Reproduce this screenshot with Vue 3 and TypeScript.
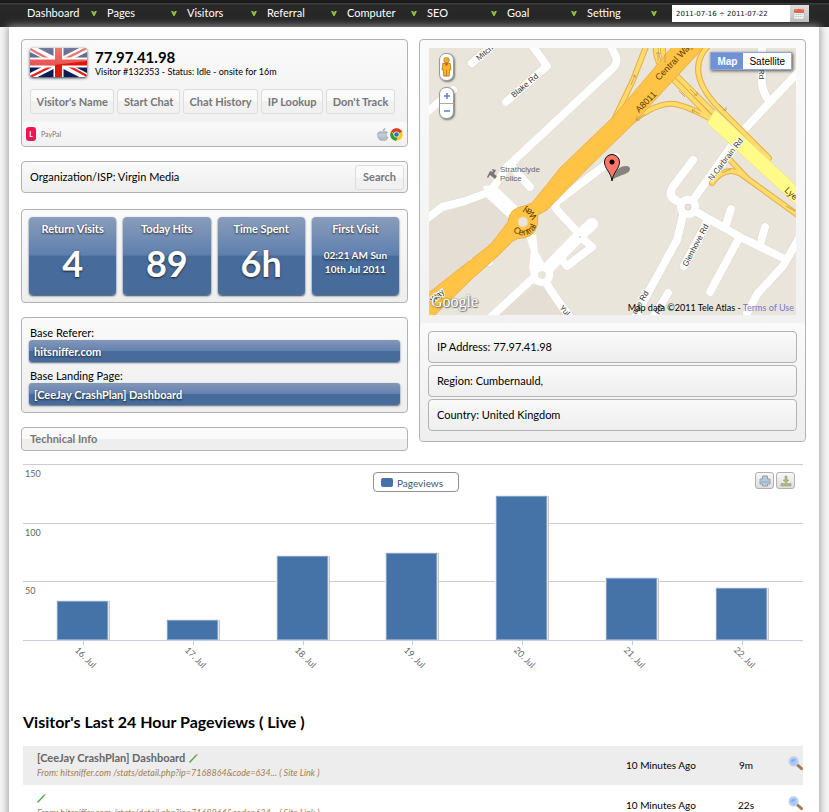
<script setup lang="ts">
import { ref } from 'vue'

interface Stat { label: string; value: string; small?: boolean }
interface Visit { title: string; source: string; ago: string; spent: string }

const menu: string[] = ['Dashboard', 'Pages', 'Visitors', 'Referral', 'Computer', 'SEO', 'Goal', 'Setting']
const range = ref('2011-07-16 ÷ 2011-07-22')
const actions: string[] = ["Visitor's Name", 'Start Chat', 'Chat History', 'IP Lookup', "Don't Track"]

const stats: Stat[] = [
  { label: 'Return Visits', value: '4' },
  { label: 'Today Hits', value: '89' },
  { label: 'Time Spent', value: '6h' },
  { label: 'First Visit', value: '02:21 AM Sun\n10th Jul 2011', small: true },
]

const location: string[] = ['IP Address: 77.97.41.98', 'Region: Cumbernauld,', 'Country: United Kingdom']

const axisMax = 150
const gridSteps: number[] = [150, 100, 50]
const days = [
  { label: '16. Jul', views: 33 },
  { label: '17. Jul', views: 17 },
  { label: '18. Jul', views: 72 },
  { label: '19. Jul', views: 74 },
  { label: '20. Jul', views: 123 },
  { label: '21. Jul', views: 53 },
  { label: '22. Jul', views: 44 },
]

const source = 'From: hitsniffer.com /stats/detail.php?ip=7168864&code=634... ( Site Link )'
const visits: Visit[] = [
  { title: '[CeeJay CrashPlan] Dashboard', source, ago: '10 Minutes Ago', spent: '9m' },
  { title: '', source, ago: '10 Minutes Ago', spent: '22s' },
]

const streets: string[] = [
  'M43 15 L66 -5',
  'M77 54 L118 18 L102 -4',
  'M-3 65 L24 42',
  'M181 -4 L187 9 Q189 15 184 20 L78 119 L60 146',
  'M84 120 L101 139',
  'M-4 172 L13 159 L33 154 L58 145',
  'M103 231 L62 269',
  'M117 234 Q125 249 142 270',
  'M151 187 L128 162 Q124 157 130 152 L187 109',
  'M152 189 L163 199 L138 218 L131 210',
  'M264 112 L243 140 Q239 149 248 153 L259 159',
  'M259 159 L311 86 L372 21',
  'M338 50 Q331 38 333 26 L333 -4',
  'M254 167 L248 192 L219 245 L206 270',
  'M239 245 L224 270',
  'M259 159 L313 190 L354 210',
  'M296 180 L302 161',
  'M331 197 L336 179',
  'M279 172 L255 218',
  'M309 192 L281 244',
  'M370 190 L354 218 L329 245 L318 265',
  'M44 214 L60 214',
  'M30 228 L-3 256',
]

const ramps: string[] = [
  'M218 -4 L204 32 L184 74',
  'M192 82 Q226 53 246 56 C264 60 272 66 284 72',
  'M227 -4 Q225 14 240 27 L284 72',
  'M234 -4 Q232 12 246 26 L288 68',
  'M281 -4 C264 12 265 32 286 56 L340 110',
  'M283 135 Q296 117 312 126 L370 168',
  'M301 112 L317 129',
]
</script>

<template>
  <div class="page">
    <header class="topbar">
      <nav class="menu">
        <a v-for="m in menu" :key="m" href="#" class="menu-item">
          <span>{{ m }}</span>
          <svg class="caret" viewBox="0 0 6 5" aria-hidden="true"><path d="M0 0H2L3 1.6L4 0H6L3.6 5H2.4Z" fill="#8cc63a" /></svg>
        </a>
      </nav>
      <div class="range">
        <input v-model="range" type="text" aria-label="Date range" />
        <button type="button" aria-label="Open calendar">
          <svg viewBox="0 0 12 12" aria-hidden="true">
            <rect x="1" y="2" width="10" height="9" rx="1" fill="#eef3f3" stroke="#b5bcbc" stroke-width=".6" />
            <rect x="1" y="1" width="10" height="4" rx="1" fill="#e4604f" />
            <path d="M3 0v2.400M9 0v2.400" stroke="#f6b5a8" />
            <path d="M2.500 6.500h7M2.500 8.500h7" stroke="#a8cfc4" stroke-width="1.200" stroke-dasharray="1.500 .6" />
          </svg>
        </button>
      </div>
    </header>

    <main class="sheet">
      <div class="columns">
        <div class="col">
          <section class="panel visitor">
            <div class="who">
              <svg class="flag" viewBox="0 0 57 29" preserveAspectRatio="none" role="img" aria-label="United Kingdom">
                <defs>
                  <linearGradient id="gloss" x1="0" y1="0" x2="0" y2="1">
                    <stop offset="0" stop-color="#fff" stop-opacity=".42" />
                    <stop offset="1" stop-color="#fff" stop-opacity=".25" />
                  </linearGradient>
                </defs>
                <rect width="57" height="29" fill="#0c1c56" />
                <path d="M0 0L57 29M57 0L0 29" stroke="#fff" stroke-width="7" />
                <path d="M0 1L24 14M57 28L33 15M0 29L26 16M57 0L31 13" stroke="#e2231c" stroke-width="2.400" />
                <path d="M28.500 0V29M0 14.500H57" stroke="#fff" stroke-width="10" />
                <path d="M28.500 0V29" stroke="#e2150f" stroke-width="7" />
                <path d="M0 14.500H57" stroke="#e2150f" stroke-width="6" />
                <path d="M0 0H57V13Q28 17 0 19Z" fill="url(#gloss)" />
              </svg>
              <div>
                <h1>77.97.41.98</h1>
                <p>Visitor #132353 - Status: Idle - onsite for 16m</p>
              </div>
            </div>
            <div class="actions">
              <button v-for="a in actions" :key="a" type="button" class="soft">{{ a }}</button>
            </div>
            <div class="foot">
              <span class="badge">L</span>
              <span class="tag">PayPal</span>
              <svg class="brand" viewBox="0 0 13 13" aria-hidden="true">
                <path d="M9 .3Q9.200 2.400 7 3.200Q6.800 1 9 .3ZM6.800 3.900Q9.500 2.600 11.600 4.300Q9.600 5.800 10.200 7.600Q10.700 9 12 9.300Q10.800 12.600 9 12.600Q7.200 11.900 5.600 12.600Q3.600 12.800 2 9.500Q.7 5.600 2.700 4.100Q4.700 2.900 6.800 3.900Z" fill="#b3bccb" stroke="#929daf" stroke-width=".5" />
                <path d="M2.500 6.500H9M2.500 8H9.500" stroke="#dce2ec" stroke-width=".6" />
              </svg>
              <svg class="brand" viewBox="0 0 13 13" aria-hidden="true">
                <circle cx="6.500" cy="6.500" r="6.200" fill="#f6cf18" />
                <path d="M6.500 6.500L1.100 3.400A6.200 6.200 0 0 1 12 3.800Z" fill="#dc3b26" />
                <path d="M1.100 3.400A6.200 6.200 0 0 0 6 12.700L8 8.500L4 7.600Z" fill="#2f9a3c" />
                <circle cx="6.500" cy="6.500" r="2.900" fill="#f4f4ee" />
                <circle cx="6.500" cy="6.500" r="2.300" fill="#3273b9" />
              </svg>
            </div>
          </section>

          <section class="panel isp">
            <span>Organization/ISP: Virgin Media</span>
            <button type="button" class="soft">Search</button>
          </section>

          <section class="panel stats">
            <div v-for="s in stats" :key="s.label" class="tile">
              <span class="tile-label">{{ s.label }}</span>
              <span :class="s.small ? 'tile-date' : 'tile-value'">{{ s.value }}</span>
            </div>
          </section>

          <section class="panel base">
            <p>Base Referer:</p>
            <a href="#" class="bluebar">hitsniffer.com</a>
            <p>Base Landing Page:</p>
            <a href="#" class="bluebar">[CeeJay CrashPlan] Dashboard</a>
          </section>

          <button type="button" class="panel tech">Technical Info</button>
        </div>

        <div class="col">
          <section class="panel where">
            <div class="map">
              <svg class="roads" viewBox="0 0 367 267" preserveAspectRatio="xMidYMid slice" role="img" aria-label="Street map">
                <defs><path id="ring" d="M84 183A14 14 0 1 0 90 160" /></defs>
                <rect width="367" height="267" fill="#e9e5da" />
                <path d="M66 267L110 235L139 267ZM0 170V258L60 205L92 180L58 150L33 157Z" fill="#e1dbd3" fill-opacity=".7" />
                <g fill="none" stroke-linecap="round" stroke-linejoin="round">
                  <g stroke="#dcd6cb" stroke-width="9">
                    <path v-for="(d, i) in streets" :key="i" :d="d" />
                  </g>
                  <g stroke="#fff" stroke-width="8">
                    <path v-for="(d, i) in streets" :key="i" :d="d" />
                  </g>
                  <path d="M113 226L151 187L163 176" stroke="#fff" stroke-width="12" />
                </g>
                <path d="M54 138L66 137L90 160L86 176L58 150ZM97 188L107 186L109 204L117 219L128 211L122 232L105 236L100 220L102 203Z" fill="#fff" />
                <circle cx="113" cy="227" r="11" fill="#fff" />
                <circle cx="113" cy="227" r="4" fill="#e9e5da" />
                <circle cx="259" cy="159" r="11" fill="#fff" />
                <circle cx="259" cy="159" r="3" fill="#e9e5da" stroke="#d4cfc4" />
                <circle cx="151" cy="189" r="1" fill="#d8d3c9" />
                <g fill="none" stroke-linecap="round">
                  <path v-for="(d, i) in ramps" :key="i" :d="d" stroke="#e5ad4c" stroke-width="6" />
                  <path v-for="(d, i) in ramps" :key="i" :d="d" stroke="#ffdb69" stroke-width="4" />
                </g>
                <path d="M286 62L292 67L375 145V164L278 75Z" fill="#fffb89" stroke="#efdb8a" stroke-width=".7" />
                <path d="M244 -2L276 -2L202 78L160 119L118 162L109 167Q110 188 94 190Q88 190 84 193L70 207L44 230L4 269H-3V247L30 221L62 196L79 174Q80 160 95 158L103 155L132 119L183 70Z" fill="#ffc345" stroke="#e9a947" stroke-width=".8" />
                <circle cx="94" cy="174" r="5" fill="#e9e5da" stroke="#f3d79a" />
                <g stroke="#b89a55" stroke-width=".8" fill="none">
                  <path d="M202 37L206 27M204 28L206 27L207 30M229 13V4M227 6L229 4L231 6M236 15V6M261 41L268 48M265 47H268V44M256 49L250 43M263 62L271 66M266 62H263L264 65M207 72L216 66M208 68L207 72L211 72M290 56L297 63M294 62H297V59M293 125L302 121M357 158L366 163" />
                </g>
                <g class="street-names">
                  <text transform="translate(50 13) rotate(-40)">Mitch</text>
                  <text transform="translate(85 50) rotate(-40)">Blake Rd</text>
                  <text transform="translate(283 133) rotate(-52)">N Carbrain Rd</text>
                  <text transform="translate(258 219) rotate(-62)">Glenhove Rd</text>
                  <text transform="translate(207 267) rotate(-60)">age Rd</text>
                  <text transform="translate(230 267) rotate(-58)">Rd</text>
                  <text transform="translate(130 260) rotate(48)">Yul</text>
                  <text transform="translate(4 255) rotate(-42)">Way</text>
                  <text transform="translate(330 21) rotate(90)">Rd</text>
                </g>
                <g class="main-names">
                  <text transform="translate(230 33) rotate(-46)">Central Way</text>
                  <text transform="translate(210 65) rotate(-45)">A8011</text>
                  <text transform="translate(355 143) rotate(42)">Lye</text>
                  <text><textPath href="#ring">Central</textPath></text>
                  <text><textPath href="#ring" startOffset="37">Way</textPath></text>
                </g>
                <g class="poi">
                  <path d="M63 130L66 124L69 125L68 122L72 123L70 127L73 129L71 132L66 128L64 131Z" fill="#777" transform="translate(-5 -1)" />
                  <text x="71" y="124">Strathclyde</text>
                  <text x="71" y="133">Police</text>
                </g>
                <path d="M183 132C185 124 190 118 197 118C203 118 202 124 196 126C191 128 187 129 183 132Z" fill="#333" fill-opacity=".55" />
                <path d="M183 133C182 124 175.500 121 175.500 114A7.500 7.500 0 0 1 190.500 114C190.500 121 184 124 183 133Z" fill="#fe7569" stroke="#111" />
                <circle cx="183" cy="114" r="2.500" fill="#000" />
              </svg>
              <div class="map-ui">
                <div class="map-controls">
                  <button type="button" class="pegman" aria-label="Street View">
                    <svg viewBox="0 0 12 22" aria-hidden="true">
                      <circle cx="6" cy="3.500" r="3" fill="#f3ae28" stroke="#a86b13" stroke-width=".7" />
                      <path d="M2 7H10L11 14H9.500L9 21H3L2.500 14H1Z" fill="#f8b42a" stroke="#a86b13" stroke-width=".8" />
                      <path d="M3.800 7L6 10.500L8.200 7Z" fill="#e5522d" /><path d="M6 14V21" stroke="#a86b13" stroke-width=".7" />
                    </svg>
                  </button>
                  <div class="zoom">
                    <button type="button" aria-label="Zoom in"><svg viewBox="0 0 8 8" aria-hidden="true"><path d="M4 1V7M1 4H7" stroke="#5f80cb" stroke-width="1.500" /></svg></button>
                    <button type="button" aria-label="Zoom out"><svg viewBox="0 0 8 8" aria-hidden="true"><path d="M1 4H7" stroke="#5f80cb" stroke-width="1.500" /></svg></button>
                  </div>
                </div>
                <div class="map-type">
                  <button type="button" class="on">Map</button>
                  <button type="button">Satellite</button>
                </div>
                <span class="logo">Google</span>
                <span class="credit">Map data ©2011 Tele Atlas - <a href="#">Terms of Use</a></span>
              </div>
            </div>
            <div class="facts">
              <div v-for="f in location" :key="f" class="fact">{{ f }}</div>
            </div>
          </section>
        </div>
      </div>

      <section class="chart">
        <div class="plot">
          <div class="grid">
            <div v-for="g in gridSteps" :key="g" class="step">{{ g }}</div>
          </div>
          <div class="bars">
            <div v-for="d in days" :key="d.label" class="slot">
              <div class="bar" :style="{ height: (d.views / axisMax) * 100 + '%' }"></div>
            </div>
          </div>
          <div class="chart-tools">
            <span class="legend"><i></i>Pageviews</span>
            <div class="export">
              <button type="button" aria-label="Print chart">
                <svg viewBox="0 0 12 12" aria-hidden="true"><path d="M3.500 1H8.500V4H11V9H8.500V11H3.500V9H1V4H3.500Z" fill="#b5c9df" stroke="#9a9fa5" /><path d="M2 7H10" stroke="#8fa9c4" /></svg>
              </button>
              <button type="button" aria-label="Download chart">
                <svg viewBox="0 0 12 12" aria-hidden="true"><path d="M5 1H7V5H9L6 8L3 5H5ZM1 8.500H11V11H1Z" fill="#a8bc76" stroke="#a0a38c" stroke-width=".6" /></svg>
              </button>
            </div>
          </div>
        </div>
        <div class="axis">
          <div v-for="d in days" :key="d.label" class="tick"><span>{{ d.label }}</span></div>
        </div>
      </section>

      <h2>Visitor's Last 24 Hour Pageviews ( Live )</h2>
      <table class="visits">
        <tbody>
          <tr v-for="v in visits" :key="v.spent">
            <td class="c-page">
              <div class="title">
                <a v-if="v.title" href="#">{{ v.title }}</a>
                <svg class="pencil" viewBox="0 0 9 9" aria-hidden="true"><path d="M.5 8.500L7 1.500" stroke="#4caf50" stroke-width="1.500" /><path d="M7 1.500L8.500 .3" stroke="#b98a7a" stroke-width="1.300" /></svg>
              </div>
              <div class="from">{{ v.source }}</div>
            </td>
            <td class="c-ago">{{ v.ago }}</td>
            <td class="c-spent">{{ v.spent }}</td>
            <td class="c-look">
              <a href="#" aria-label="Visit details">
                <svg viewBox="0 0 16 16" aria-hidden="true">
                  <path d="M10 9.500L14.500 13.500" stroke="#a07a58" stroke-width="3" stroke-linecap="round" />
                  <circle cx="6" cy="5.800" r="4.700" fill="#a9c8fa" stroke="#c3cfea" stroke-width="1.500" />
                  <path d="M3 6Q4 2.500 8 3.500Q7 7 3 6Z" fill="#6a9cf0" fill-opacity=".7" />
                </svg>
              </a>
            </td>
          </tr>
        </tbody>
      </table>
    </main>
  </div>
</template>

<style>
body {
  margin: 0;
  background: #f6f6f6;
}
</style>

<style scoped>
* {
  box-sizing: border-box;
}
.page {
  font: 11px/14px "Trebuchet MS", Lato, sans-serif;
  color: #000;
  background: #f6f6f6;
}
h1, h2, p {
  margin: 0;
}
button, input {
  font: inherit;
}
a {
  color: inherit;
  text-decoration: none;
}
svg {
  display: block;
}
.topbar {
  display: flex;
  justify-content: space-between;
  align-items: flex-start;
  height: 27px;
  padding: 2px 20px 0 27px;
  border-top: 3px solid #1b1b1b;
  background: linear-gradient(#3c3c3c 0, #3c3c3c 1px, #292929 2px, #242424);
}
.menu {
  display: flex;
}
.menu-item {
  display: flex;
  justify-content: space-between;
  align-items: center;
  width: 80px;
  padding-right: 10px;
  color: #fff;
  line-height: 16px;
}
.caret {
  width: 6px;
  height: 5px;
}
.range {
  display: flex;
  width: 137px;
  height: 17px;
}
.range input {
  flex: 1;
  min-width: 0;
  padding: 0 4px;
  border: 0;
  background: #fff;
  color: #111;
  font-size: 7px;
  font-family: "DejaVu Sans", sans-serif;
}
.range button {
  width: 19px;
  padding: 2px 3px;
  border: 0;
  background: linear-gradient(#dedede, #bdbdbd);
}
.range svg {
  width: 12px;
  height: 12px;
}
.sheet {
  margin: 0 10px 0 9px;
  padding: 12px 13px 0 12px;
  background: #fff;
  box-shadow: 0 0 8px 1px #999;
}
.columns {
  display: grid;
  grid-template-columns: 1fr 1fr;
  gap: 11px;
  align-items: start;
}
.panel {
  border: 1px solid #b2b2b2;
  border-radius: 4px;
  background: linear-gradient(#fafafa, #eee);
}
.col {
  display: flex;
  flex-direction: column;
  gap: 14px;
  min-width: 0;
}
.visitor {
  height: 108px;
}
.who {
  display: flex;
  gap: 8px;
  padding: 7px 8px 0;
}
.flag {
  width: 57px;
  height: 29px;
  margin-top: 1px;
  border-radius: 3px;
  box-shadow: 0 1px 3px #234;
}
.who h1 {
  font-size: 15px;
  line-height: 20px;
}
.who p {
  font-size: 9px;
  line-height: 10px;
}
.actions {
  display: flex;
  gap: 3px;
  margin: 12px 12px 8px 8px;
}
.soft {
  height: 25px;
  padding: 0 7px;
  border: 1px solid #ddd;
  border-radius: 3px;
  background: linear-gradient(#fafafa 50%, #f1f1f1 50%);
  color: #777;
  font-weight: 700;
  white-space: nowrap;
}
.actions .soft {
  flex: 1 1 auto;
  padding: 0;
}
.foot {
  display: flex;
  align-items: center;
  height: 24px;
  padding: 0 4px;
  border-radius: 4px;
  background: linear-gradient(#fafafa, #f0f0f0);
}
.badge {
  width: 10px;
  height: 14px;
  border-radius: 3px;
  background: #ee145b;
  color: #fff;
  font-size: 7px;
  font-weight: 700;
  text-align: center;
}
.tag {
  flex: 1;
  padding-left: 5px;
  color: #777;
  font-size: 7px;
  line-height: 12px;
}
.brand {
  width: 13px;
  height: 13px;
  margin-left: 1px;
}
.isp {
  display: flex;
  align-items: center;
  justify-content: space-between;
  height: 32px;
  padding: 0 3px 0 8px;
}
.stats {
  display: grid;
  grid-template-columns: repeat(4, 1fr);
  gap: 7px;
  height: 94px;
  margin-top: 2px;
  padding: 7px 8px 6px 7px;
}
.tile {
  display: flex;
  flex-direction: column;
  align-items: center;
  height: 78px;
  padding-top: 5px;
  border-radius: 4px;
  background: linear-gradient(#8a9dba, #5e7fae 49%, #476b9b 50%);
  box-shadow: 0 1px 2px #345;
  color: #fff;
  font-weight: 700;
  text-shadow: 0 1px 2px #222;
}
.tile-value {
  margin-top: 6px;
  font-size: 36px;
  line-height: 42px;
}
.tile-date {
  margin-top: 12px;
  font-size: 10px;
  text-align: center;
  white-space: pre;
}
.base {
  padding: 8px 7px 7px;
}
.base p {
  padding-left: 1px;
}
.base .bluebar + p {
  margin-top: 7px;
}
.bluebar {
  display: block;
  height: 22px;
  padding-left: 5px;
  border-radius: 3px;
  background: linear-gradient(#8397b8, #6482b0 49%, #476b9b 50%);
  box-shadow: 0 1px 2px #567;
  color: #fff;
  font-weight: 700;
  line-height: 23px;
  text-shadow: 0 1px 2px #222;
}
.tech {
  height: 24px;
  padding: 0 8px;
  background: linear-gradient(#fafafa 50%, #eee 50%);
  color: #777;
  font-weight: 700;
  text-align: left;
}
.where {
  padding-top: 8px;
}
.map {
  display: grid;
  height: 267px;
  margin: 0 9px 8px;
  overflow: hidden;
}
.roads, .map-ui {
  grid-area: 1 / 1;
  width: 100%;
  height: 267px;
}
.street-names, .poi, .main-names {
  font: 8px "Liberation Sans", sans-serif;
  fill: #333;
}
.street-names {
  paint-order: stroke;
  stroke: #fff;
  stroke-width: 2px;
}
.main-names {
  font-size: 9px;
  fill: #5a3a08;
}
.poi {
  fill: #666;
}
.map-ui {
  z-index: 1;
  display: grid;
  grid-template: 1fr auto / auto 1fr;
  justify-items: end;
}
.map-controls {
  justify-self: start;
  padding: 5px 10px;
}
.pegman, .zoom {
  width: 15px;
  border: 1px solid #9a9a9a;
  border-radius: 7px;
  background: #fff;
  box-shadow: 1px 1px 2px #777;
}
.pegman {
  display: block;
  height: 28px;
  padding: 3px 1px;
}
.pegman svg {
  width: 11px;
  height: 20px;
}
.zoom {
  height: 32px;
  margin-top: 6px;
}
.zoom button {
  display: grid;
  place-items: center;
  width: 13px;
  height: 15px;
  padding: 0;
  border: 0;
  background: none;
}
.zoom button + button {
  border-top: 1px solid #aaa;
}
.zoom svg {
  width: 8px;
  height: 8px;
}
.map-type {
  display: flex;
  height: 18px;
  margin: 4px 4px 0 0;
  border: 1px solid #8ea6d8;
  box-shadow: 1px 1px 3px #555;
}
.map-type button {
  padding: 0 6px;
  border: 0;
  background: #fff;
  font: 10px/15px "Liberation Sans", sans-serif;
}
.map-type .on {
  background: #7091d6;
  color: #fff;
  font-weight: 700;
}
.logo {
  padding-left: 2px;
  color: #fff;
  font: 16px/26px "Liberation Serif", serif;
  text-shadow: 0 0 2px #555, 1px 1px 1px #777;
}
.credit {
  align-self: end;
  padding-right: 2px;
  font-size: 9px;
}
.credit a {
  color: #7777cc;
}
.facts {
  display: flex;
  flex-direction: column;
  gap: 2px;
  padding: 8px 8px 10px;
  border-radius: 4px;
  background: linear-gradient(#fafafa, #eee);
}
.fact {
  height: 32px;
  padding-left: 8px;
  border: 1px solid #b2b2b2;
  border-radius: 4px;
  background: linear-gradient(#fafafa, #eee);
  line-height: 30px;
}
.chart {
  height: 236px;
  margin: 13px 3px 0 2px;
}
.plot {
  display: grid;
  height: 177px;
  border-bottom: 1px solid #c0d0e0;
}
.grid, .bars, .chart-tools {
  grid-area: 1 / 1;
}
.grid {
  display: grid;
  grid-template-rows: repeat(3, 1fr);
}
.step {
  padding: 2px;
  border-top: 1px solid #ccc;
  color: #666;
  font-size: 9px;
}
.bars, .axis {
  display: grid;
  grid-template-columns: repeat(7, 1fr);
  padding: 0 6px;
}
.slot {
  display: flex;
  align-items: flex-end;
  justify-content: center;
  padding-right: 2px;
}
.bar {
  width: 51px;
  border: 1px solid #7d9fc8;
  border-bottom-color: #89a5c8;
  background: #4572a7;
  box-shadow: 0 -1px #eee, -1px 0 #eee, 1px 0 #e4e4e4, 2px 0 #c8c8c8;
}
.chart-tools {
  display: grid;
  grid-template-columns: 1fr auto 1fr;
  align-items: start;
  padding: 8px 8px 0 14px;
}
.legend {
  grid-column: 2;
  display: flex;
  align-items: center;
  gap: 4px;
  height: 20px;
  padding: 1px 15px 0 7px;
  border: 1px solid #909090;
  border-radius: 4px;
  background: #fff;
  color: #3e576f;
  font-size: 10px;
}
.legend i {
  width: 12px;
  height: 9px;
  border-radius: 2px;
  background: #4572a7;
}
.export {
  display: flex;
  justify-content: flex-end;
  gap: 2px;
}
.export button {
  width: 19px;
  height: 17px;
  padding: 1px 3px;
  border: 1px solid #b0b0b0;
  border-radius: 3px;
  background: linear-gradient(#f8f8f8, #ddd);
}
.export svg {
  width: 12px;
  height: 12px;
}
.tick {
  display: flex;
  justify-content: center;
}
.tick::before {
  content: "";
  width: 1px;
  height: 4px;
  background: #c0d0e0;
}
.tick span {
  width: 0;
  color: #666;
  font-size: 9px;
  line-height: 10px;
  white-space: nowrap;
  transform: translate(-4px, 4px) rotate(45deg);
  transform-origin: 0 0;
}
h2 {
  margin: 11px 0 13px 2px;
  font-size: 16px;
  font-weight: 700;
  line-height: 22px;
}
.visits {
  width: calc(100% - 5px);
  margin-left: 2px;
  border-collapse: collapse;
}
.visits tr {
  height: 39px;
}
.visits tr + tr {
  height: 40px;
  border-top: 1px solid #fff;
}
.visits tr:nth-child(odd) {
  background: #ededed;
}
.visits td {
  padding: 0;
}
.visits .c-page {
  padding-left: 14px;
}
.title {
  display: flex;
  align-items: center;
  gap: 4px;
  height: 15px;
  color: #666;
  font-weight: 700;
}
.pencil {
  width: 9px;
  height: 9px;
}
.from {
  color: #a57c50;
  font-size: 9px;
  font-style: italic;
}
.c-ago {
  width: 96px;
  font-size: 10px;
}
.c-spent {
  width: 48px;
  text-align: center;
  font-size: 10px;
}
.visits .c-look {
  width: 33px;
  padding-bottom: 3px;
}
.c-look svg {
  width: 15px;
  height: 15px;
  margin-left: auto;
}
</style>
